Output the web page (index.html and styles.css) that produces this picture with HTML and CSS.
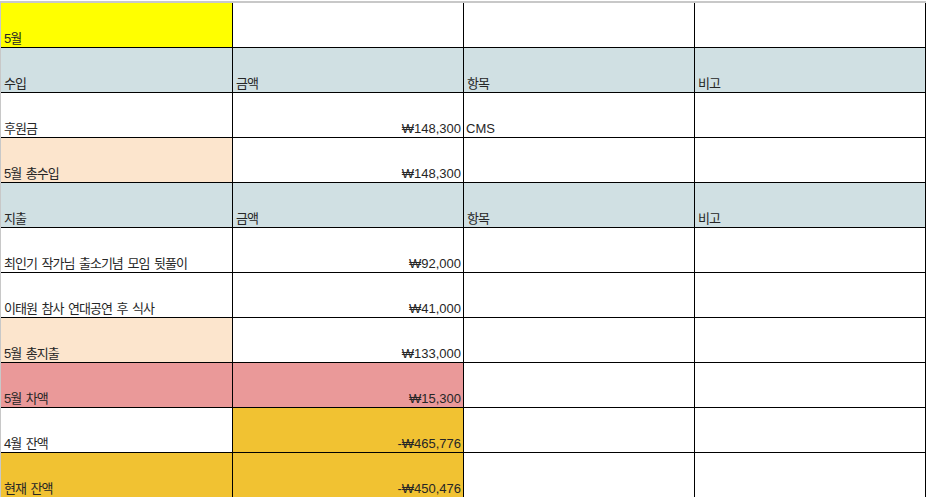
FILE: index.html
```html
<!DOCTYPE html>
<html lang="ko">
<head>
<meta charset="utf-8">
<title>5월 결산</title>
<link rel="stylesheet" href="styles.css">
</head>
<body>
<div class="sheet">
  <div class="c yellow">5월</div><div class="c"></div><div class="c"></div><div class="c"></div>
  <div class="c head">수입</div><div class="c head">금액</div><div class="c head">항목</div><div class="c head">비고</div>
  <div class="c">후원금</div><div class="c num">₩148,300</div><div class="c latin">CMS</div><div class="c"></div>
  <div class="c peach">5월 총수입</div><div class="c num">₩148,300</div><div class="c"></div><div class="c"></div>
  <div class="c head">지출</div><div class="c head">금액</div><div class="c head">항목</div><div class="c head">비고</div>
  <div class="c">최인기 작가님 출소기념 모임 뒷풀이</div><div class="c num">₩92,000</div><div class="c"></div><div class="c"></div>
  <div class="c">이태원 참사 연대공연 후 식사</div><div class="c num">₩41,000</div><div class="c"></div><div class="c"></div>
  <div class="c peach">5월 총지출</div><div class="c num">₩133,000</div><div class="c"></div><div class="c"></div>
  <div class="c red">5월 차액</div><div class="c num red">₩15,300</div><div class="c"></div><div class="c"></div>
  <div class="c">4월 잔액</div><div class="c num gold">-₩465,776</div><div class="c"></div><div class="c"></div>
  <div class="c gold">현재 잔액</div><div class="c num gold">-₩450,476</div><div class="c"></div><div class="c"></div>
</div>
</body>
</html>
```
FILE: styles.css
```css
*, *::before, *::after {
  box-sizing: border-box;
}
html, body {
  margin: 0;
  padding: 0;
  background: #ffffff;
}
body {
  padding-top: 1px;
  overflow: hidden;
  height: 497px;
}
.sheet {
  display: grid;
  grid-template-columns: 232px 231px 231px 231px;
  grid-auto-rows: 45px;
  width: 926px;
  border-top: 2px solid #c8c8c8;
  border-left: 1px solid #c8c8c8;
  font-family: "Liberation Sans", "Noto Sans CJK KR", sans-serif;
  font-size: 13px;
  color: #262626;
}
.c {
  display: flex;
  align-items: flex-end;
  padding: 0 3px 0 3px;
  border-right: 1px solid #000;
  border-bottom: 1px solid #000;
  line-height: 16px;
  letter-spacing: -1px;
  word-spacing: 2px;
  white-space: pre;
  overflow: hidden;
  background: #ffffff;
}
.num {
  justify-content: flex-end;
  padding-right: 2px;
  letter-spacing: 0;
  word-spacing: 0;
}
.latin {
  padding-left: 2px;
  letter-spacing: 0;
  word-spacing: 0;
}
.yellow { background: #ffff00; }
.head { background: #d0e0e3; }
.peach { background: #fce5cd; }
.red { background: #ea9999; }
.gold { background: #f1c232; }
```
